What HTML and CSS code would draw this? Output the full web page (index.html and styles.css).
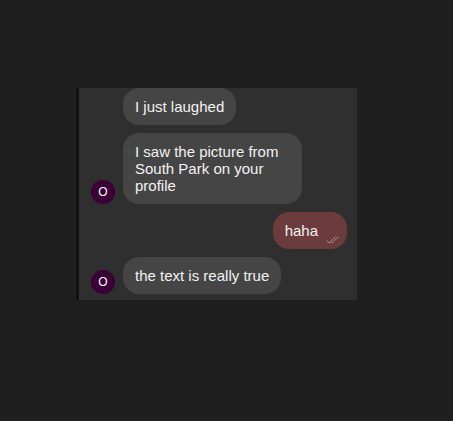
FILE: index.html
```html
<!DOCTYPE html>
<html>
<head>
<meta charset="utf-8">
<link rel="stylesheet" href="styles.css">
</head>
<body>
<div class="chat">
  <div class="row in">
    <div class="spacer"></div>
    <div class="bubble">I just laughed</div>
  </div>
  <div class="row in">
    <div class="avatar">O</div>
    <div class="bubble">I saw the picture from South Park on your profile</div>
  </div>
  <div class="row out">
    <div class="bubble mine">
      <span>haha</span>
      <svg class="check" width="15" height="8" viewBox="0 0 15 8"><path d="M0.5 4.5 L3 7 L9.5 0.5 M5 6 L6 7 L12.5 0.5" fill="none" stroke="#a08c8c" stroke-width="1"/></svg>
    </div>
  </div>
  <div class="row in">
    <div class="avatar">O</div>
    <div class="bubble">the text is really true</div>
  </div>
</div>
</body>
</html>
```
FILE: styles.css
```css
html, body {
  margin: 0;
  padding: 0;
  background: #1f1f1f;
}
body {
  font-family: "Liberation Sans", Arial, sans-serif;
  height: 421px;
}
.chat {
  margin: 88px 0 0 76px;
  width: 281px;
  height: 212px;
  box-sizing: border-box;
  background: #2f2f2f;
  border-left: 3px solid #101010;
  display: flex;
  flex-direction: column;
  gap: 8px;
}
.row {
  display: flex;
  align-items: flex-end;
}
.row.in {
  padding-left: 12px;
}
.row.out {
  justify-content: flex-end;
  padding-right: 10px;
}
.spacer {
  width: 24px;
  flex: none;
}
.avatar {
  width: 24px;
  height: 24px;
  flex: none;
  border-radius: 50%;
  background: #3b0036;
  color: #ffffff;
  font-size: 12px;
  line-height: 24px;
  text-align: center;
}
.bubble {
  margin-left: 8px;
  max-width: 179px;
  box-sizing: border-box;
  padding: 10px 12px;
  background: #454545;
  color: #f2f2f2;
  font-size: 15px;
  line-height: 17px;
  border-radius: 16px;
}
.bubble.mine {
  margin-left: 0;
  background: #6c3b3b;
  display: flex;
  align-items: flex-end;
  padding: 10px 6px 10px 12px;
}
.check {
  margin-left: 8px;
  margin-bottom: -5px;
  flex: none;
}
```
